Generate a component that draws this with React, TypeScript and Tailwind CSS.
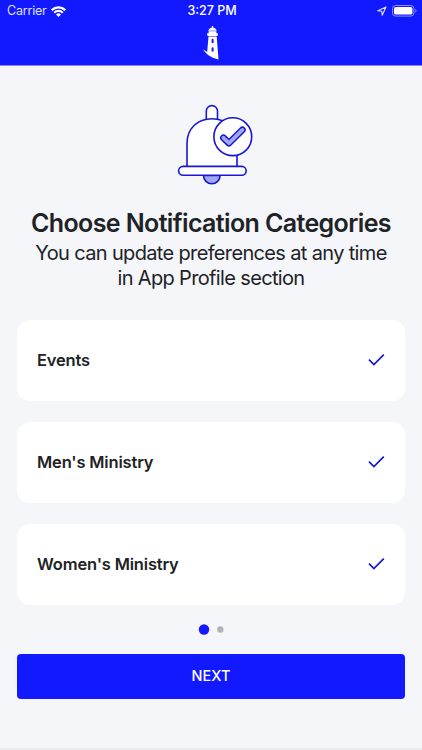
const categories = ["Events", "Men's Ministry", "Women's Ministry"];

function WifiIcon() {
  return (
    <svg width="15" height="11" viewBox="0 0 15 11" fill="none" stroke="white" strokeWidth="2.2">
      <path d="M0.7 4.1a9.6 9.6 0 0 1 13.6 0" />
      <path d="M3.2 6.7a6.1 6.1 0 0 1 8.6 0" />
      <path d="M7.5 11 5 8.6a3.5 3.5 0 0 1 5 0Z" fill="white" stroke="none" />
    </svg>
  );
}

function LocationIcon() {
  return (
    <svg width="10" height="10" viewBox="0 0 10 10" fill="none" stroke="#dcdfff" strokeWidth="1.1" strokeLinejoin="round">
      <path d="M9 1 0.8 4.8 4.8 5.2 5.2 9.2Z" />
    </svg>
  );
}

function BatteryIcon() {
  return (
    <svg width="25" height="12" viewBox="0 0 25 12" fill="none">
      <rect x="0.5" y="0.5" width="21.4" height="10.6" rx="3" stroke="#8b8fff" />
      <rect x="2" y="2" width="18.4" height="7.6" rx="1.7" fill="white" />
      <path d="M23.3 4v3.7c.9-.4 1.3-1 1.3-1.85S24.2 4.4 23.3 4Z" fill="#8b8fff" />
    </svg>
  );
}

function LighthouseLogo() {
  return (
    <svg width="18" height="34" viewBox="0 0 18 34" fill="white">
      <path d="M8.9 0h1.2v1.4C12.2 2 13.5 3 13.7 4.7H5.3C5.5 3 6.8 2 8.9 1.4Z" />
      <path d="M5.6 5.2h7.8v3H5.6Z" />
      <path d="M4.1 7.3h10.8v2l-1 .7H5.1l-1-.7Z" />
      <path
        fillRule="evenodd"
        d="M5.5 10.5h8.2l1.8 22.9C10.5 32.5 3.5 29.5.1 23.3c1.3 1.2 2.8 2.2 4.1 2.7ZM8.6 13.2v3.9h2v-3.9q-1-1-2 0ZM8.6 21.8v3.8h2v-3.8q-1-1-2 0Z"
      />
    </svg>
  );
}

function BellIllustration() {
  return (
    <svg
      className="mx-auto block"
      width="92"
      height="100"
      viewBox="0 0 92 100"
      fill="white"
      stroke="#1717d2"
      strokeWidth="1.6"
    >
      <path d="M41.3 28V16.2a5.6 5.6 0 0 1 11.2 0V28" />
      <path d="M22 71.5V48.5C22 33.5 32.5 23.7 47 23.7S72 33.5 72 48.5V71.5" />
      <path d="M38.5 80.5a8.3 8.3 0 0 0 16.6 0Z" fill="#a1a8f3" />
      <rect x="13.6" y="71.4" width="67.6" height="8.9" rx="4.45" />
      <circle cx="67.8" cy="41.7" r="18.9" />
      <g fill="none" strokeLinecap="round" strokeLinejoin="round">
        <path d="M58.4 42.8 64 48.2 77.4 34.9" strokeWidth="6.8" />
        <path d="M58.4 42.8 64 48.2 77.4 34.9" stroke="#a1a8f3" strokeWidth="3.8" />
      </g>
    </svg>
  );
}

function CategoryCard({ name }: { name: string }) {
  return (
    <button className="flex h-[81px] w-full items-center justify-between rounded-[13px] bg-white px-5 text-left">
      <span className="text-[16.5px] font-semibold tracking-[-0.17px]">{name}</span>
      <svg width="17" height="13" viewBox="0 0 17 13" fill="none" stroke="#1717d2" strokeWidth="1.7">
        <path d="M1 5.7 5.9 10.6 15.800 0.700" />
      </svg>
    </button>
  );
}

export default function App() {
  return (
    <div className="flex h-[750px] w-[422px] flex-col overflow-hidden bg-[#f4f6fa] font-['Inter','Liberation_Sans',sans-serif] text-[#212226]">
      <header className="h-[65px] shrink-0 bg-[#1219ff] text-white">
        <div className="grid h-[22px] grid-cols-3 items-center pr-[5px] pl-[7px]">
          <div className="flex items-center gap-1">
            <span className="text-[12.5px] leading-none tracking-[-0.2px] text-[#dfe1ff]">Carrier</span>
            <WifiIcon />
          </div>
          <span className="text-center text-[12.5px] leading-none font-medium">3:27 PM</span>
          <div className="flex items-center justify-end gap-[5px]">
            <LocationIcon />
            <BatteryIcon />
          </div>
        </div>
        <div className="mt-1 flex justify-center pl-[2px]">
          <LighthouseLogo />
        </div>
      </header>
      <div className="h-px shrink-0 bg-[#8387fd]" />

      <main className="px-[17px] pt-[29px]">
        <BellIllustration />
        <h1 className="mt-[13px] text-center text-[25px] leading-[30px] font-semibold tracking-[-0.62px] whitespace-nowrap">
          Choose Notification Categories
        </h1>
        <p className="mt-[3px] text-center text-[20px] leading-[25px] tracking-[-0.65px] whitespace-nowrap">
          You can update preferences at any time
          <br />
          in App Profile section
        </p>

        <div className="mt-[29px] flex flex-col gap-[21px]">
          {categories.map((name) => (
            <CategoryCard key={name} name={name} />
          ))}
        </div>

        {/* Page indicator */}
        <div className="mt-[19px] flex h-[11px] items-center justify-center">
          <svg width="26" height="11" viewBox="0 0 26 11">
            <circle cx="6" cy="5.5" r="5.2" fill="#1219ff" />
            <circle cx="22.3" cy="5.5" r="3.2" fill="#b3b3b5" />
          </svg>
        </div>

        <button className="mt-[19px] h-[44.5px] w-full rounded-[4px] bg-[#1219ff] text-[14.5px] font-medium text-white">
          NEXT
        </button>
      </main>

      <div className="mt-auto h-[2px] bg-[#ececf1]" />
    </div>
  );
}
